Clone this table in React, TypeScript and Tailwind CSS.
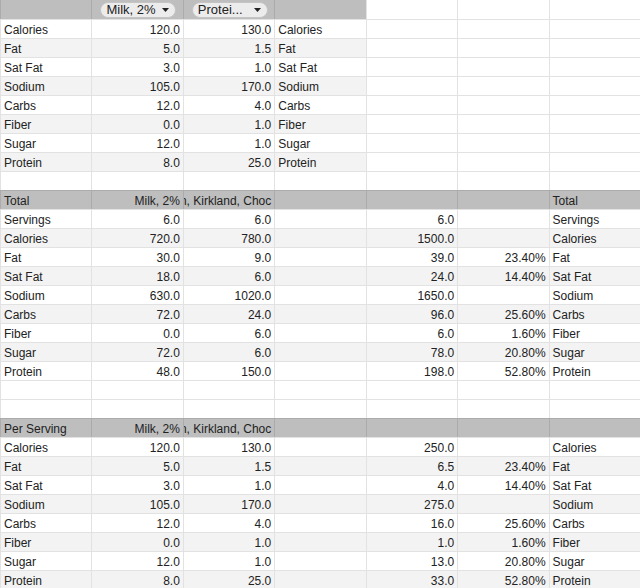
import React from "react";

type Kind = "header" | "band" | "plain";

const sec1: string[][] = [
  ["Calories", "120.0", "130.0", "Calories"],
  ["Fat", "5.0", "1.5", "Fat"],
  ["Sat Fat", "3.0", "1.0", "Sat Fat"],
  ["Sodium", "105.0", "170.0", "Sodium"],
  ["Carbs", "12.0", "4.0", "Carbs"],
  ["Fiber", "0.0", "1.0", "Fiber"],
  ["Sugar", "12.0", "1.0", "Sugar"],
  ["Protein", "8.0", "25.0", "Protein"],
];

const totals: string[][] = [
  ["Servings", "6.0", "6.0", "", "6.0", "", "Servings"],
  ["Calories", "720.0", "780.0", "", "1500.0", "", "Calories"],
  ["Fat", "30.0", "9.0", "", "39.0", "23.40%", "Fat"],
  ["Sat Fat", "18.0", "6.0", "", "24.0", "14.40%", "Sat Fat"],
  ["Sodium", "630.0", "1020.0", "", "1650.0", "", "Sodium"],
  ["Carbs", "72.0", "24.0", "", "96.0", "25.60%", "Carbs"],
  ["Fiber", "0.0", "6.0", "", "6.0", "1.60%", "Fiber"],
  ["Sugar", "72.0", "6.0", "", "78.0", "20.80%", "Sugar"],
  ["Protein", "48.0", "150.0", "", "198.0", "52.80%", "Protein"],
];

const perServing: string[][] = [
  ["Calories", "120.0", "130.0", "", "250.0", "", "Calories"],
  ["Fat", "5.0", "1.5", "", "6.5", "23.40%", "Fat"],
  ["Sat Fat", "3.0", "1.0", "", "4.0", "14.40%", "Sat Fat"],
  ["Sodium", "105.0", "170.0", "", "275.0", "", "Sodium"],
  ["Carbs", "12.0", "4.0", "", "16.0", "25.60%", "Carbs"],
  ["Fiber", "0.0", "1.0", "", "1.0", "1.60%", "Fiber"],
  ["Sugar", "12.0", "1.0", "", "13.0", "20.80%", "Sugar"],
  ["Protein", "8.0", "25.0", "", "33.0", "52.80%", "Protein"],
];

type Row = { cells: string[]; kinds: Kind[] };

function buildRows(): Row[] {
  const rows: Row[] = [];
  const empty = ["", "", "", "", "", "", ""];
  const allPlain: Kind[] = Array(7).fill("plain");
  rows.push({
    cells: ["", "__chip1", "__chip2", "", "", "", ""],
    kinds: ["header", "header", "header", "header", "plain", "plain", "plain"],
  });
  sec1.forEach((r) => {
    const idx = rows.length;
    const band = idx % 2 === 0;
    rows.push({
      cells: [...r, "", "", ""],
      kinds: [0, 1, 2, 3, 4, 5, 6].map((c) => (band && c <= 3 ? "band" : "plain")) as Kind[],
    });
  });
  rows.push({ cells: empty, kinds: allPlain });
  rows.push({
    cells: ["Total", "Milk, 2%", "Protein, Kirkland, Choc", "", "", "", "Total"],
    kinds: Array(7).fill("header"),
  });
  totals.forEach((r) => {
    const idx = rows.length;
    rows.push({ cells: r, kinds: Array(7).fill(idx % 2 === 0 ? "band" : "plain") });
  });
  rows.push({ cells: empty, kinds: allPlain });
  rows.push({ cells: empty, kinds: allPlain });
  rows.push({
    cells: ["Per Serving", "Milk, 2%", "Protein, Kirkland, Choc", "", "", "", ""],
    kinds: Array(7).fill("header"),
  });
  perServing.forEach((r) => {
    const idx = rows.length;
    rows.push({ cells: r, kinds: Array(7).fill(idx % 2 === 0 ? "band" : "plain") });
  });
  return rows;
}

function Chip({ label }: { label: string }) {
  return (
    <div className="flex h-[16px] w-[76px] items-center justify-between rounded-full border border-[#c4c4c4] bg-[#ececec] pl-[5px] pr-[6px] text-[13px] leading-[14px] text-[#222]">
      <span>{label}</span>
      <svg width="7" height="4" viewBox="0 0 7 4">
        <polygon points="0,0 7,0 3.5,4" fill="#222" />
      </svg>
    </div>
  );
}

const rightCols = [1, 2, 4, 5];

export default function App() {
  const rows = buildRows();
  return (
    <div className="h-[588px] w-[640px] overflow-hidden bg-white font-['Liberation_Sans',Arial,sans-serif] text-[12px] text-[#222]">
      {rows.map((row, r) => (
        <div key={r} className="grid h-[19px] grid-cols-7">
          {row.cells.map((text, c) => {
            const kind = row.kinds[c];
            const bg =
              kind === "header"
                ? "bg-[#bebebe] border-[#ababab]"
                : kind === "band"
                ? "bg-[#f3f3f3] border-[#e2e2e2]"
                : "bg-white border-[#e2e2e2]";
            const top = r > 0 ? "border-t" : "";
            if (text === "__chip1" || text === "__chip2") {
              return (
                <div key={c} className={`flex items-center overflow-hidden border-l pl-[8px] ${bg}`}>
                  <Chip label={text === "__chip1" ? "Milk, 2%" : "Protei..."} />
                </div>
              );
            }
            const right = rightCols.includes(c);
            return (
              <div
                key={c}
                className={`flex overflow-hidden whitespace-nowrap border-l px-[3px] pt-[2px] leading-[16px] ${top} ${bg} ${right ? "justify-end" : "justify-start"}`}
              >
                <span className="shrink-0">{text}</span>
              </div>
            );
          })}
        </div>
      ))}
    </div>
  );
}
